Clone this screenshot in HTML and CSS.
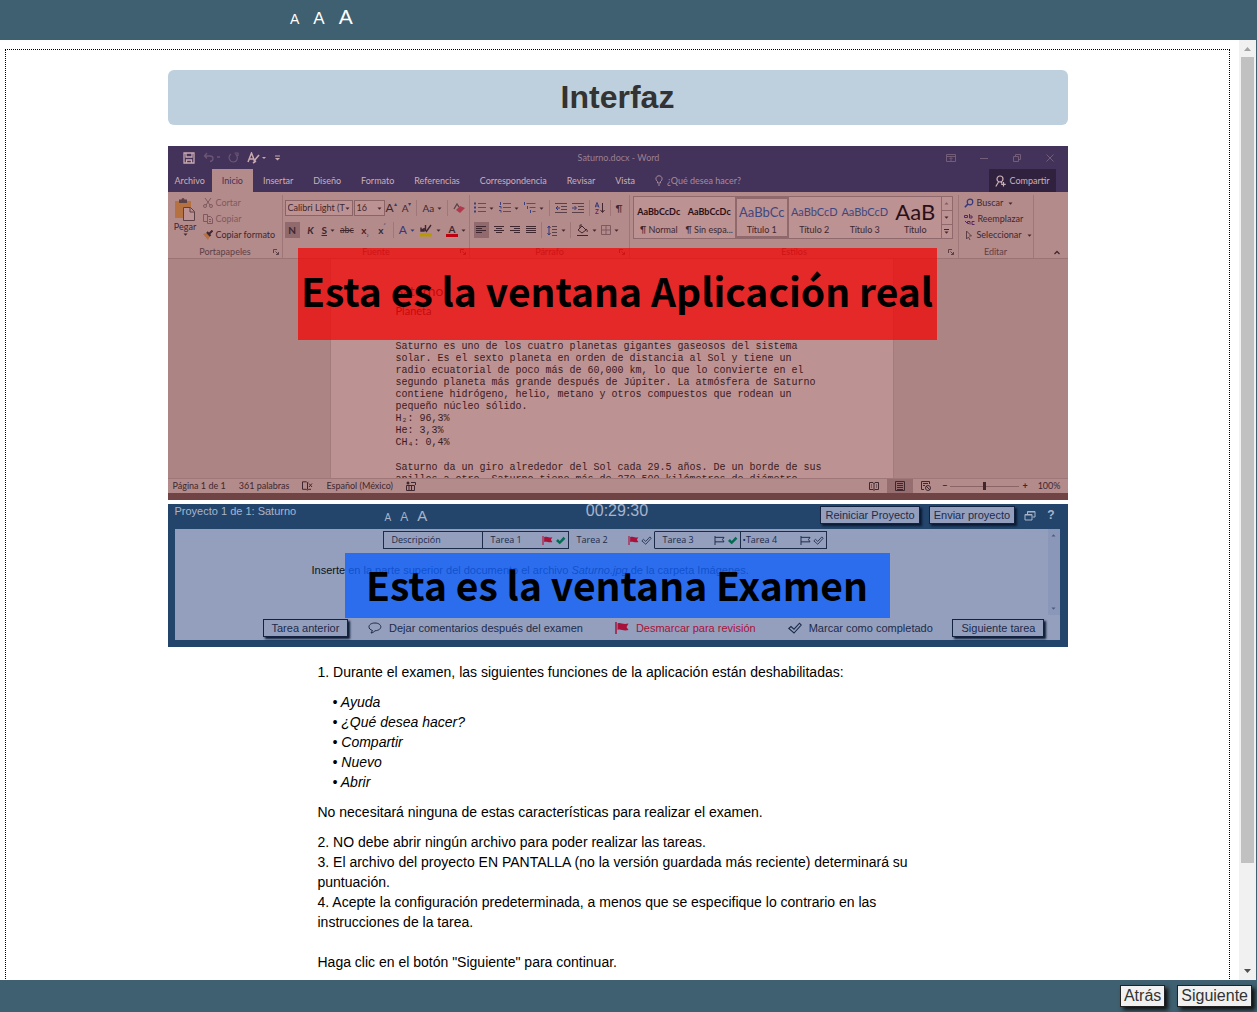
FILE: index.html
```html
<!DOCTYPE html>
<html lang="es">

<head>
  <meta charset="utf-8">
  <meta name="viewport" content="width=device-width, initial-scale=1.0">
  <title>Interfaz</title>
  <link rel="stylesheet" href="styles.css">
</head>

<body>
  <!-- shared icons -->
  <svg class="sprite" aria-hidden="true">
    <symbol id="caret" viewBox="0 0 5 3"><path d="M0.5 0.5h4L2.5 2.8z" fill="currentColor"/></symbol>
    <symbol id="launcher" viewBox="0 0 6 6"><path d="M0.5 4V0.5H4M2.5 2.5l3 3M5.500 3v2.500H3" fill="none" stroke="currentColor"/></symbol>
    <symbol id="flag" viewBox="0 0 14 12"><path d="M1 0v12" stroke="currentColor" stroke-width="1.500"/><path d="M2.500 1.500c3-1.500 5 1.500 11 0l-2 3.500 2 3c-5 1.500-8-1.500-11 0z" fill="currentColor"/></symbol>
    <symbol id="flag-o" viewBox="0 0 14 12"><path d="M1 0v12M1 1.800h12l-2 3 2 3H1" fill="none" stroke="currentColor" stroke-width="1.300"/></symbol>
    <symbol id="check" viewBox="0 0 14 12"><path d="M1 6.500L3.500 4 6 6.500 11 1l2.500 2.500L6 11z" fill="currentColor"/></symbol>
    <symbol id="check-o" viewBox="0 0 14 12"><path d="M.8 6.500L3 4.500 6 7.200 11.500 1.200l1.700 1.800L6 11z" fill="none" stroke="currentColor" stroke-width="1.100"/></symbol>
    <symbol id="lines-left" viewBox="0 0 12 10"><path d="M1 1.500h10M1 3.500h6M1 5.500h10M1 7.500h6" stroke="currentColor"/></symbol>
    <symbol id="lines-center" viewBox="0 0 12 10"><path d="M1 1.500h10M3 3.500h6M1 5.500h10M3 7.500h6" stroke="currentColor"/></symbol>
    <symbol id="lines-right" viewBox="0 0 12 10"><path d="M1 1.500h10M5 3.500h6M1 5.500h10M5 7.500h6" stroke="currentColor"/></symbol>
    <symbol id="lines-full" viewBox="0 0 12 10"><path d="M1 1.500h10M1 3.500h10M1 5.500h10M1 7.500h10" stroke="currentColor"/></symbol>
    <symbol id="bullets" viewBox="0 0 12 12"><path d="M4 1.500h8M4 5.500h8M4 9.500h8" stroke="#6a4a52"/><path d="M0 0.500h2v2H0zM0 4.500h2v2H0zM0 8.500h2v2H0z" fill="#3f3f7c"/></symbol>
    <symbol id="numbers" viewBox="0 0 12 12"><path d="M4 1.500h8M4 5.500h8M4 9.500h8" stroke="#6a4a52"/><path d="M1.500 0v3M0 4.500h2v2M0 8.500h2v2" fill="none" stroke="#3f3f7c"/></symbol>
    <symbol id="multi" viewBox="0 0 12 12"><path d="M2.500 1.500h9M5.500 5.500h6M8.500 9.500h3" stroke="#6a4a52"/><path d="M0.500 0v3M3.500 4v3M6.500 8v3" stroke="#3f3f7c"/></symbol>
    <symbol id="outdent" viewBox="0 0 12 10"><path d="M0 .5h12M6 3.500h6M6 6.500h6M0 9.500h12" stroke="#5c4048"/><path d="M5 5H1M3 3L1 5l2 2" fill="none" stroke="#33397e"/></symbol>
    <symbol id="indent" viewBox="0 0 12 10"><path d="M0 .5h12M6 3.500h6M6 6.500h6M0 9.500h12" stroke="#5c4048"/><path d="M0 5h4M2.500 3l2 2-2 2" fill="none" stroke="#33397e"/></symbol>
  </svg>

  <div id="top_bar">
    <button class="size_s" aria-label="Texto chico">A</button>
    <button class="size_m" aria-label="Texto mediano">A</button>
    <button class="size_l" aria-label="Texto grande">A</button>
  </div>

  <div id="main">
    <div id="scroller">
      <div id="content">
        <h1>Interfaz</h1>

        <div class="demo">
          <!-- application window -->
          <div class="word">
            <div class="word_title">
              <div class="quick">
                <svg width="12" height="12" viewBox="0 0 12 12"><path d="M1 1h10v10H1zM3 1v4h6V1M3.500 11V8h5v3" fill="none" stroke="#c9a9b0" stroke-width="1.300"/></svg>
                <svg class="dim" width="17" height="11" viewBox="0 0 17 11"><path d="M4 1L1.500 4 4 6.500M2 4h5c4 0 4 5 0 5.500M14 5h3" fill="none" stroke="currentColor" stroke-width="1.300"/></svg>
                <svg class="dim" width="11" height="11" viewBox="0 0 11 11"><path d="M3 2C-1 5 2 10 5.500 10S11 5 7.500 2M6.500 1H10v3" fill="none" stroke="currentColor" stroke-width="1.200"/></svg>
                <svg width="20" height="12" viewBox="0 0 20 12"><path d="M1 10L4.500 1 8 10M2 7h5" fill="none" stroke="#c9a9b0" stroke-width="1.500"/><path d="M7 9l5-6M6 11l3-2" stroke="#c9a9b0" stroke-width="1.600"/><path d="M15 5h4l-2 2z" fill="#c9a9b0"/></svg>
                <svg width="5" height="6" viewBox="0 0 5 6"><path d="M0 1h5" stroke="#c9a9b0"/><path d="M0 3h5L2.500 5.500z" fill="#c9a9b0"/></svg>
              </div>
              <span class="doc_name">Saturno.docx - Word</span>
              <div class="win_controls">
                <svg width="10" height="10" viewBox="0 0 10 10"><path d="M.5 1.500h9v7h-9zM.5 3.500h9M5 8V5M3.500 6L5 4.500 6.500 6" fill="none" stroke="currentColor"/></svg>
                <svg width="10" height="10" viewBox="0 0 10 10"><path d="M1 5.500h8" stroke="currentColor"/></svg>
                <svg width="10" height="10" viewBox="0 0 10 10"><path d="M1.500 3.500h5v5h-5zM3.500 3V1.500h5v5H7" fill="none" stroke="currentColor"/></svg>
                <svg width="10" height="10" viewBox="0 0 10 10"><path d="M1.500 1.500l7 7M8.500 1.500l-7 7" stroke="currentColor"/></svg>
              </div>
            </div>

            <div class="word_tabs">
              <button>Archivo</button>
              <button class="active">Inicio</button>
              <button>Insertar</button>
              <button>Diseño</button>
              <button>Formato</button>
              <button>Referencias</button>
              <button>Correspondencia</button>
              <button>Revisar</button>
              <button>Vista</button>
              <button class="tell_me">
                <svg width="8" height="11" viewBox="0 0 8 11"><path d="M2.500 8V6.500C0 5 .5 .8 4 .8S8 5 5.500 6.500V8zM3 10h2" fill="none" stroke="currentColor"/></svg>
                ¿Qué desea hacer?
              </button>
              <button class="share">
                <svg width="11" height="12" viewBox="0 0 11 12"><circle cx="5" cy="4" r="3" fill="none" stroke="currentColor" stroke-width="1.200"/><path d="M.8 11.500L3.500 7M6 6.800l1 1.500M8.500 7v4.500M6.200 9.300h4.500" stroke="currentColor" stroke-width="1.200"/></svg>
                Compartir
              </button>
            </div>

            <div class="ribbon">
              <div class="group g_clip">
                <div class="group_body">
                  <button class="paste">
                    <svg width="20" height="23" viewBox="0 0 20 23"><path d="M0 3h16v17H0z" fill="#b5713f"/><path d="M4 3V1.500h2.500a1.500 1.500 0 0 1 3 0H12V5H4z" fill="#5c4048"/><path d="M8.500 9.500h7l4 4v9h-11z" fill="#bc9292" stroke="#5c4048"/><path d="M15 10v4h4" fill="none" stroke="#5c4048"/></svg>
                    Pegar
                    <svg class="caret"><use href="#caret"/></svg>
                  </button>
                  <div class="stack">
                    <button class="off"><svg width="10" height="10" viewBox="0 0 10 10"><path d="M2 0l5 7M8 0L3 7" stroke="currentColor"/><circle cx="2" cy="8" r="1.500" fill="none" stroke="currentColor"/><circle cx="8" cy="8" r="1.500" fill="none" stroke="currentColor"/></svg>Cortar</button>
                    <button class="off"><svg width="10" height="10" viewBox="0 0 10 10"><path d="M.5 .5h4v7h-4zM4.500 2.500h3l2 2v5h-5zM6 5.500h2M6 7.500h2" fill="none" stroke="currentColor"/></svg>Copiar</button>
                    <button><svg width="10" height="10" viewBox="0 0 10 10"><path d="M0 4l4-1 3 3-2 4z" fill="#b5713f"/><path d="M4 2l3.500 4M6 4l3.500-3.500" stroke="#40272f" stroke-width="2"/></svg>Copiar formato</button>
                  </div>
                </div>
                <div class="group_label">Portapapeles<svg class="launcher"><use href="#launcher"/></svg></div>
              </div>

              <div class="group g_font">
                <div class="rows">
                  <div class="row">
                    <span class="pick"><select class="font_name" aria-label="Fuente"><option>Calibri Light (T</option></select><svg class="caret"><use href="#caret"/></svg></span>
                    <span class="pick"><select class="font_size" aria-label="Tamaño"><option>16</option></select><svg class="caret"><use href="#caret"/></svg></span>
                    <button class="big">A<sup>▴</sup></button>
                    <button>A<sup>▾</sup></button>
                    <button class="sep">Aa<svg class="caret"><use href="#caret"/></svg></button>
                    <button class="sep"><svg width="12" height="11" viewBox="0 0 12 11"><path d="M1 6l3-5 2 3" fill="none" stroke="#5c4048" stroke-width="1.300"/><path d="M3 7l4-4 5 2-5 5z" fill="#b0384c"/></svg></button>
                  </div>
                  <div class="row">
                    <button class="on"><b>N</b></button>
                    <button class="cell"><b><i>K</i></b></button>
                    <button class="cell"><b><u>S</u></b><svg class="caret"><use href="#caret"/></svg></button>
                    <button class="abc"><s>abc</s></button>
                    <button class="cell"><b>x</b><sub>₂</sub></button>
                    <button class="cell"><b>x</b><sup>²</sup></button>
                    <button class="sep outline">A<svg class="caret"><use href="#caret"/></svg></button>
                    <button><svg width="13" height="13" viewBox="0 0 13 13"><path d="M0 9h12v3.500H0z" fill="#b79a00"/><path d="M1 5.500h3M1 3.500v3.500h3V4M6 8l5-7M5.500 1v6" fill="none" stroke="#40272f" stroke-width="1.400"/></svg><svg class="caret"><use href="#caret"/></svg></button>
                    <button><span class="font_color">A</span><svg class="caret"><use href="#caret"/></svg></button>
                  </div>
                </div>
                <div class="group_label">Fuente<svg class="launcher"><use href="#launcher"/></svg></div>
              </div>

              <div class="group g_par">
                <div class="rows par_rows">
                  <div class="row">
                    <button><svg width="12" height="12"><use href="#bullets"/></svg><svg class="caret"><use href="#caret"/></svg></button>
                    <button><svg width="12" height="12"><use href="#numbers"/></svg><svg class="caret"><use href="#caret"/></svg></button>
                    <button><svg width="12" height="12"><use href="#multi"/></svg><svg class="caret"><use href="#caret"/></svg></button>
                    <button class="sep"><svg width="12" height="10"><use href="#outdent"/></svg></button>
                    <button><svg width="12" height="10"><use href="#indent"/></svg></button>
                    <button class="sep"><svg width="10" height="12" viewBox="0 0 10 12"><path d="M0 5.500L2 .5l2 5M.8 4h2.500" fill="none" stroke="#33397e"/><path d="M.5 7.500h3l-3 4h3" fill="none" stroke="#7c2870"/><path d="M7.500 1v9M5.500 8l2 2.500 2-2.500" fill="none" stroke="#40272f"/></svg></button>
                    <button class="sep">¶</button>
                  </div>
                  <div class="row tight">
                    <button class="on"><svg width="12" height="10"><use href="#lines-left"/></svg></button>
                    <button><svg width="12" height="10"><use href="#lines-center"/></svg></button>
                    <button><svg width="12" height="10"><use href="#lines-right"/></svg></button>
                    <button><svg width="12" height="10"><use href="#lines-full"/></svg></button>
                    <button class="sep"><svg width="11" height="11" viewBox="0 0 11 11"><path d="M5 1.500h5M5 4.500h5M5 7.500h5M5 10.500h5" stroke="#5c4048"/><path d="M2 1v9M.5 3L2 1l1.500 2M.5 8L2 10l1.500-2" fill="none" stroke="#33397e"/></svg><svg class="caret"><use href="#caret"/></svg></button>
                    <button class="sep"><svg width="13" height="12" viewBox="0 0 13 12"><path d="M2 6l4-4 4 4-4 3zM4 4V1h2M10 5c2 1 1 3 1 3M1 11.500h11" fill="none" stroke="#40272f"/></svg><svg class="caret"><use href="#caret"/></svg></button>
                    <button><svg width="10" height="10" viewBox="0 0 10 10"><path d="M.5 .5h9v9h-9zM5 .5v9M.5 5h9" fill="none" stroke="#7d5a60"/></svg><svg class="caret"><use href="#caret"/></svg></button>
                  </div>
                </div>
                <div class="group_label">Párrafo<svg class="launcher"><use href="#launcher"/></svg></div>
              </div>

              <div class="group g_styles">
                <div class="gallery">
                  <button><span class="s_norm">AaBbCcDc</span>¶ Normal</button>
                  <button><span class="s_norm">AaBbCcDc</span>¶ Sin espa...</button>
                  <button class="picked"><span class="s_h1">AaBbCc</span>Título 1</button>
                  <button><span class="s_h2">AaBbCcD</span>Título 2</button>
                  <button><span class="s_h3">AaBbCcD</span>Título 3</button>
                  <button><span class="s_title">AaB</span>Título</button>
                  <div class="gallery_nav">
                    <span class="off"><svg class="caret up"><use href="#caret"/></svg></span>
                    <span><svg class="caret"><use href="#caret"/></svg></span>
                    <span class="more"><svg class="caret"><use href="#caret"/></svg></span>
                  </div>
                </div>
                <div class="group_label">Estilos<svg class="launcher"><use href="#launcher"/></svg></div>
              </div>

              <div class="group g_edit">
                <div class="stack">
                  <button><svg width="10" height="10" viewBox="0 0 10 10"><circle cx="6" cy="4" r="2.800" fill="none" stroke="#33397e" stroke-width="1.200"/><path d="M4 6L.8 9.200" stroke="#33397e" stroke-width="1.600"/></svg>Buscar<svg class="caret"><use href="#caret"/></svg></button>
                  <button><svg width="11" height="11" viewBox="0 0 11 11"><path d="M.5 3.500h3v-2h-3v2M5.500 0v4h2.500V2H5.500M1 7l2 2M5 9.500H3.500v-2H6v3M10.500 7.500H8v3h2.500" fill="none" stroke="#5d2462"/></svg>Reemplazar</button>
                  <button><svg width="10" height="11" viewBox="0 0 10 11"><path d="M2.500 1v8l2-2 1.500 3M2.500 1l5 5H5" fill="none" stroke="#5c4048"/></svg>Seleccionar<svg class="caret"><use href="#caret"/></svg></button>
                </div>
                <div class="group_label">Editar</div>
              </div>
              <svg class="collapse" width="6" height="5" viewBox="0 0 6 5"><path d="M.5 4L3 1.500 5.500 4" fill="none" stroke="#40272f" stroke-width="1.300"/></svg>
            </div>

            <div class="doc">
              <div class="page">
                <p class="doc_h1">Saturno</p>
                <p class="doc_h2">Planeta</p>
                <p>Saturno es uno de los cuatro planetas gigantes gaseosos del sistema<br>
                  solar. Es el sexto planeta en orden de distancia al Sol y tiene un<br>
                  radio ecuatorial de poco más de 60,000 km, lo que lo convierte en el<br>
                  segundo planeta más grande después de Júpiter. La atmósfera de Saturno<br>
                  contiene hidrógeno, helio, metano y otros compuestos que rodean un<br>
                  pequeño núcleo sólido.<br>
                  H₂: 96,3%<br>
                  He: 3,3%<br>
                  CH₄: 0,4%</p>
                <p>Saturno da un giro alrededor del Sol cada 29.5 años. De un borde de sus<br>
                  anillos a otro, Saturno tiene más de 270,500 kilómetros de diámetro</p>
              </div>
            </div>

            <div class="status">
              <span>Página 1 de 1</span>
              <span>361 palabras</span>
              <svg width="11" height="10" viewBox="0 0 11 10"><path d="M.5 .8h4l1 1 1-1M5.500 2v6.500M.5 .8v7.500h4l1 1 1-1H9M7 2.500l3 3.500M10 2.500L7 6" fill="none" stroke="currentColor"/></svg>
              <span>Español (México)</span>
              <svg width="10" height="10" viewBox="0 0 10 10"><path d="M.5 4.500h8v5h-8zM3 5v4M5.500 5v4M5 1.500h4.500V4" fill="none" stroke="currentColor"/><circle cx="2" cy="2" r="1.500" fill="currentColor"/></svg>
              <div class="views">
                <button aria-label="Modo de lectura"><svg width="10" height="10" viewBox="0 0 10 10"><path d="M.5 1.500H4l1 1 1-1h3.500v7H6l-1 1-1-1H.5zM5 2v7M2 4h1M2 6h1M7 4h1M7 6h1" fill="none" stroke="currentColor"/></svg></button>
                <button class="on" aria-label="Diseño de impresión"><svg width="10" height="10" viewBox="0 0 10 10"><path d="M.5 .5h9v9h-9zM2 2.500h6M2 4.500h6M2 6.500h6M2 8.500h6" fill="none" stroke="currentColor"/></svg></button>
                <button aria-label="Diseño web"><svg width="10" height="10" viewBox="0 0 10 10"><path d="M3 8.500H.5v-8h8V3M2 2.500h5M2 4.500h2" fill="none" stroke="currentColor"/><circle cx="7" cy="7" r="2.500" fill="none" stroke="currentColor"/><path d="M5 5l4 4" stroke="currentColor"/></svg></button>
              </div>
              <div class="zoom">
                <b>−</b>
                <input type="range" min="0" max="100" value="50" aria-label="Zoom">
                <b>+</b>
                <span>100%</span>
              </div>
            </div>
            <div class="banner banner_app">Esta es la ventana Aplicación real</div>
          </div>

          <!-- exam window -->
          <div class="exam">
            <div class="exam_head">
              <div class="exam_info">
                <span class="project">Proyecto 1 de 1: Saturno</span>
                <div class="sizes"><span>A</span><span class="m">A</span><span class="l">A</span></div>
              </div>
              <span class="timer">00:29:30</span>
              <div class="exam_actions">
                <button class="raised">Reiniciar Proyecto</button>
                <button class="raised">Enviar proyecto</button>
                <svg width="12" height="11" viewBox="0 0 12 11"><path d="M1 4.500h7v5.500H1zM1 5h7M3.500 4V1.500H11V7H8.500M3.500 2H11" fill="none" stroke="#a9b4cb"/></svg>
                <b>?</b>
              </div>
            </div>
            <div class="panel">
              <div class="panel_body">
                <div class="panel_text">
                  <div class="tasks">
                    <button class="first">Descripción</button>
                    <button>Tarea 1<span><svg class="red"><use href="#flag"/></svg><svg class="green"><use href="#check"/></svg></span></button>
                    <button class="current">Tarea 2<span><svg class="red"><use href="#flag"/></svg><svg><use href="#check-o"/></svg></span></button>
                    <button>Tarea 3<span><svg><use href="#flag-o"/></svg><svg class="green"><use href="#check"/></svg></span></button>
                    <button class="dotted">•Tarea 4<span><svg><use href="#flag-o"/></svg><svg><use href="#check-o"/></svg></span></button>
                  </div>
                  <p>Inserte en la parte superior del documento el archivo <i>Saturno.jpg</i> de la carpeta Imágenes.</p>
                </div>
                <div class="mini_scroll"><svg class="up"><use href="#caret"/></svg><svg><use href="#caret"/></svg></div>
              </div>
              <div class="panel_foot">
                <button class="raised flat">Tarea anterior</button>
                <div class="marks">
                  <button class="plain"><svg width="14" height="12" viewBox="0 0 14 12"><path d="M3 11l1.500-2.500C-1 7 0 1 7 1s8.500 7 0 7.800C6 9.800 4.500 11 3 11z" fill="none" stroke="currentColor"/></svg>Dejar comentarios después del examen</button>
                  <button class="plain red"><svg width="14" height="12"><use href="#flag"/></svg>Desmarcar para revisión</button>
                  <button class="plain"><svg width="14" height="12"><use href="#check-o"/></svg>Marcar como completado</button>
                </div>
                <button class="raised flat">Siguiente tarea</button>
              </div>
            </div>
            <div class="banner banner_exam">Esta es la ventana Examen</div>
          </div>
        </div>

        <div class="text">
          <p>1. Durante el examen, las siguientes funciones de la aplicación están deshabilitadas:</p>
          <ul>
            <li>Ayuda</li>
            <li>¿Qué desea hacer?</li>
            <li>Compartir</li>
            <li>Nuevo</li>
            <li>Abrir</li>
          </ul>
          <p>No necesitará ninguna de estas características para realizar el examen.</p>
          <p>2. NO debe abrir ningún archivo para poder realizar las tareas.<br>
            3. El archivo del proyecto EN PANTALLA (no la versión guardada más reciente) determinará su puntuación.<br>
            4. Acepte la configuración predeterminada, a menos que se especifique lo contrario en las instrucciones de la tarea.<br>
            <br>
            Haga clic en el botón "Siguiente" para continuar.</p>
        </div>
      </div>
    </div>
    <div class="scrollbar" aria-hidden="true">
      <svg width="17" height="17" viewBox="0 0 17 17"><path d="M5 11h7L8.500 7z" fill="#a3a3a3"/></svg>
      <div class="track"><div class="thumb"></div></div>
      <svg width="17" height="17" viewBox="0 0 17 17"><path d="M5 6h7l-3.500 4z" fill="#505050"/></svg>
    </div>
  </div>

  <div id="footer">
    <button>Atrás</button>
    <button>Siguiente</button>
  </div>
</body>

</html>
```

FILE: styles.css
```css
* {
  box-sizing: border-box;
}

body {
  display: flex;
  flex-direction: column;
  height: 100vh;
  margin: 0;
  overflow: hidden;
  background-color: #3f6070;
  font-family: "Liberation Sans", Arial, sans-serif;
  font-size: 14px;
  line-height: 20px;
  color: #000;
}

button {
  margin: 0;
  padding: 0;
  border: 0;
  background: none;
  font: inherit;
  color: inherit;
  white-space: nowrap;
  cursor: pointer;
}

svg {
  display: block;
  flex: none;
}

p {
  margin: 0;
}

.sprite {
  position: absolute;
  width: 0;
  height: 0;
}

/* top bar */
#top_bar {
  display: flex;
  flex: none;
  align-items: baseline;
  gap: 14px;
  height: 40px;
  padding: 7px 0 0 290px;
  color: #fff;
}

.size_s {
  font-size: 14px;
}

.size_m {
  font-size: 17px;
}

.size_l {
  font-size: 21px;
}

/* scrolling area */
#main {
  display: flex;
  flex: 1;
  min-height: 0;
  margin-right: 1px;
  background-color: #fff;
}

#scroller {
  flex: 1;
  padding: 9px 9px 9px 5px;
  overflow-y: auto;
  scrollbar-width: none;
}

.scrollbar {
  display: flex;
  flex-direction: column;
  width: 17px;
  background-color: #f1f1f1;
}

.track {
  flex: 1;
  padding: 0 2px;
}

.thumb {
  height: 89%;
  background-color: #c1c1c1;
}

#content {
  padding: 20px 0 100px;
  border: 1px dotted #000;
}

h1 {
  max-width: 900px;
  margin: 0 auto 21px;
  border-radius: 6px;
  background-color: #bed0de;
  font-size: 32px;
  line-height: 55px;
  text-align: center;
  color: #333;
}

.text {
  max-width: 600px;
  margin: 15px auto 0;
}

.text p,
.text ul {
  margin: 0 0 10px;
}

.text ul {
  padding-left: 15px;
  list-style: none;
  font-style: italic;
}

.text li::before {
  content: "• ";
}

/* illustration */
.demo {
  display: flex;
  flex-direction: column;
  gap: 4px;
  max-width: 900px;
  margin: 0 auto;
}

.demo button {
  cursor: default;
}

.banner {
  position: absolute;
  font-family: "Noto Sans CJK SC", "Open Sans", sans-serif;
  font-size: 39px;
  font-weight: bold;
  text-align: center;
  white-space: nowrap;
  color: #000;
}

.banner_app {
  top: 102px;
  left: 130px;
  right: 131px;
  height: 92px;
  line-height: 84px;
  background-color: rgba(243, 5, 6, 0.75);
}

.banner_exam {
  top: 49px;
  left: 177px;
  right: 178px;
  height: 65px;
  line-height: 63px;
  background-color: rgba(18, 96, 249, 0.8);
}

/* word window */
.word {
  position: relative;
  border-bottom: 7px solid #704444;
  background-color: #433259;
  font-family: Lato, "Open Sans", sans-serif;
  font-size: 9px;
  line-height: 12px;
  color: #40272f;
}

.word_title {
  display: grid;
  grid-template-columns: 1fr auto 1fr;
  align-items: center;
  height: 23px;
  padding: 0 13px 0 15px;
  color: #9b8092;
}

.quick {
  display: flex;
  align-items: center;
  gap: 8px;
}

.dim {
  color: #6b5675;
}

.win_controls {
  display: flex;
  justify-content: flex-end;
  gap: 23px;
  color: #745d78;
}

.word_tabs {
  display: flex;
  height: 23px;
  padding-right: 12px;
  color: #cdb0b6;
}

.word_tabs button {
  padding: 0 10px;
}

.word_tabs button:first-child {
  padding: 0 7px;
}

.word_tabs .active {
  background-color: #b48b8b;
  color: #433259;
}

.word_tabs .tell_me {
  display: flex;
  align-items: center;
  gap: 4px;
  color: #a88b9b;
}

.word_tabs .share {
  display: flex;
  align-items: center;
  gap: 3px;
  margin-left: auto;
  padding: 0 6px;
  background-color: #30223f;
}

.ribbon {
  display: flex;
  height: 67px;
  padding-top: 3px;
  border-bottom: 1px solid #9c7475;
  background-color: #b48b8b;
}

.group {
  display: flex;
  flex-direction: column;
  justify-content: space-between;
  border-right: 1px solid #9f7778;
}

.g_clip {
  width: 115px;
}

.g_font {
  width: 187px;
}

.g_par {
  width: 160px;
}

.g_styles {
  width: 329px;
}

.g_edit {
  width: 75px;
}

.group_body {
  display: flex;
}

.group_label {
  display: flex;
  justify-content: center;
  padding-left: 10px;
  color: #5c4048;
}

.launcher {
  width: 6px;
  height: 6px;
  margin: 3px 3px 0 auto;
  color: #5c4048;
}

.group_label::before {
  content: "";
  margin-left: auto;
}

.g_edit .group_label {
  padding: 0;
}

.g_edit .group_label::before {
  display: none;
}

.paste {
  display: flex;
  flex-direction: column;
  align-items: center;
  width: 35px;
  padding-top: 3px;
}

.caret {
  width: 5px;
  height: 3px;
}

.stack {
  display: flex;
  flex-direction: column;
}

.g_edit .stack {
  padding-left: 5px;
}

.stack button {
  display: flex;
  align-items: center;
  gap: 3px;
  height: 16px;
}

.stack .caret {
  margin-left: 2px;
}

.off {
  color: #7d5a60;
}

.rows {
  display: flex;
  flex-direction: column;
  gap: 4px;
  padding: 4px 0 0 2px;
}

.par_rows {
  padding-left: 4px;
}

.row {
  display: flex;
  align-items: center;
  gap: 5px;
  height: 18px;
}

.row button {
  display: flex;
  align-items: center;
  justify-content: center;
  gap: 3px;
  height: 16px;
  font-size: 10px;
}

.tight {
  gap: 4px;
}

.row .sep {
  padding-left: 5px;
  border-left: 1px solid #9f7778;
}

.row .on {
  width: 15px;
  background-color: #906a6c;
}

.row .cell {
  min-width: 12px;
}

.row .abc {
  font-size: 9px;
}

.row .outline {
  font-size: 12px;
  color: #33397e;
}

.row .big {
  font-size: 12px;
}

.row sup,
.row sub {
  align-self: flex-start;
  margin-left: -3px;
  font-size: 6px;
  line-height: 8px;
  color: #33397e;
}

.row sub {
  align-self: flex-end;
}

.font_color {
  width: 12px;
  border-bottom: 3px solid #c00010;
  line-height: 10px;
  font-weight: bold;
}

.pick {
  position: relative;
  margin-right: -4px;
}

.pick .caret {
  position: absolute;
  top: 7px;
  right: 3px;
}

.pick select {
  display: block;
  height: 16px;
  margin: 0;
  padding: 0 0 0 2px;
  border: 1px solid #8a6466;
  border-radius: 0;
  background-color: #bc9292;
  font: inherit;
  color: inherit;
  appearance: none;
}

.font_name {
  width: 68px;
}

.font_size {
  width: 31px;
}

.gallery {
  display: flex;
  height: 43px;
  margin: 1px 5px 0 3px;
  border: 1px solid #8f696b;
  background-color: #bc9292;
}

.gallery button {
  display: flex;
  flex: 1;
  flex-direction: column;
  align-items: center;
  justify-content: flex-end;
  min-width: 0;
  padding-bottom: 2px;
}

.gallery .picked {
  border: 2px solid #8f696b;
  padding-bottom: 0;
}

.gallery button span {
  height: 24px;
  line-height: 24px;
}

.s_norm {
  font-size: 9px;
  font-weight: bold;
  color: #2b0f18;
}

.s_h1 {
  font-size: 13px;
  color: #3d4781;
}

.s_h2,
.s_h3 {
  font-size: 11px;
  color: #3d4781;
}

.s_title {
  font-size: 22px;
  color: #2b0f18;
}

.gallery_nav {
  display: flex;
  flex-direction: column;
  width: 11px;
  border-left: 1px solid #8f696b;
}

.gallery_nav span {
  display: flex;
  flex: 1;
  align-items: center;
  justify-content: center;
  border-bottom: 1px solid #8f696b;
}

.gallery_nav .more {
  border-bottom: 0;
}

.gallery_nav .more .caret {
  height: 5px;
  padding-top: 1px;
  border-top: 1px solid #40272f;
}

.up {
  transform: rotate(180deg);
}

.collapse {
  align-self: flex-end;
  margin: 0 8px 3px auto;
}

.doc {
  height: 219px;
  overflow: hidden;
  background-color: #ac8483;
}

.page {
  height: 219px;
  margin: 0 174px 0 162px;
  padding: 22px 0 0 65px;
  border: 1px solid #a57c7c;
  border-width: 0 1px;
  overflow: hidden;
  background-color: #bc9292;
  font-family: "Liberation Mono", "Courier New", monospace;
  font-size: 10px;
  color: #3a1b20;
  white-space: nowrap;
}

.page p {
  margin-bottom: 13px;
}

.page .doc_h1,
.page .doc_h2 {
  margin: 0;
  font-family: Lato, "Open Sans", sans-serif;
  font-size: 14px;
  line-height: 20px;
}

.page .doc_h2 {
  margin-bottom: 20px;
  font-size: 11px;
}

.status {
  display: flex;
  align-items: center;
  gap: 13px;
  height: 15px;
  padding: 0 7px 0 5px;
  border-top: 1px solid #9f7778;
  background-color: #b48b8b;
}

.views {
  display: flex;
  margin-left: auto;
}

.views button {
  padding: 2px 8px;
}

.views .on {
  background-color: #966e70;
}

.zoom {
  display: flex;
  align-items: center;
  gap: 3px;
  margin-left: -10px;
}

.zoom span {
  margin-left: 7px;
}

.zoom input {
  width: 69px;
  height: 9px;
  margin: 0;
  background: linear-gradient(#8a6466, #8a6466) no-repeat center / 100% 1px;
  appearance: none;
}

.zoom input::-webkit-slider-thumb {
  width: 3px;
  height: 8px;
  background: #40272f;
  appearance: none;
}

/* exam window */
.exam {
  position: relative;
  padding: 0 8px 7px 7px;
  background-color: #23456b;
  font-size: 11px;
  line-height: 14px;
  color: #1c2b4a;
}

.exam_head {
  display: grid;
  grid-template-columns: 1fr auto 1fr;
  height: 25px;
  color: #a9b4cb;
}

.exam_info {
  display: flex;
}

.project {
  flex: none;
  width: 210px;
}

.sizes {
  display: flex;
  align-items: baseline;
  gap: 9px;
  padding-top: 5px;
  font-size: 10px;
}

.sizes .m {
  font-size: 12px;
}

.sizes .l {
  font-size: 15px;
}

.timer {
  font-size: 16px;
}

.exam_actions {
  display: flex;
  align-items: flex-start;
  justify-content: flex-end;
  gap: 9px;
  padding: 2px 3px 0 0;
}

.exam_actions svg {
  margin-top: 4px;
}

.exam_actions b {
  padding: 2px;
  font-size: 12px;
}

.raised {
  height: 18px;
  padding: 0 4px;
  border: 1px solid #13233f;
  box-shadow: 2px 2px 2px #0b1a33;
  background-color: #949fbe;
  color: #1c2b4a;
}

.panel {
  background-color: #949fbe;
}

.panel_body {
  display: flex;
  height: 86px;
}

.panel_text {
  flex: 1;
  padding: 2px 0 0 137px;
}

.panel_text p {
  margin-top: 14px;
  color: #0b1220;
}

.tasks {
  display: flex;
  margin-left: 71px;
  font-family: "Open Sans", "Noto Sans", sans-serif;
  font-size: 9px;
}

.tasks button {
  display: flex;
  align-items: center;
  justify-content: space-between;
  width: 86px;
  height: 18px;
  padding: 0 2px 0 8px;
  border: 1px solid #1c2b4a;
  border-left: 0;
}

.tasks .first {
  width: 100px;
  border-left: 1px solid #1c2b4a;
}

.tasks .current {
  border-top-color: transparent;
  border-bottom-color: transparent;
}

.tasks .dotted {
  padding-left: 2px;
}

.tasks span {
  display: flex;
  gap: 2px;
}

.tasks svg {
  width: 11px;
  height: 9px;
}

.red {
  color: #a8123a;
}

.green {
  color: #046a52;
}

.mini_scroll {
  display: flex;
  flex-direction: column;
  align-items: center;
  justify-content: space-between;
  width: 12px;
  padding: 5px 0;
  background-color: #8b97b8;
  color: #4b5a7f;
}

.mini_scroll svg {
  width: 5px;
  height: 3px;
}

.panel_foot {
  display: flex;
  align-items: center;
  justify-content: space-between;
  height: 25px;
  padding: 0 15px 0 88px;
}

.marks {
  display: flex;
  gap: 32px;
}

.flat {
  padding: 0 8px;
}

.plain {
  display: flex;
  align-items: center;
  gap: 7px;
}

/* bottom bar */
#footer {
  display: flex;
  flex: none;
  align-items: flex-start;
  justify-content: flex-end;
  gap: 12px;
  height: 32px;
  padding: 5px 5px 0 0;
}

#footer button {
  height: 22px;
  padding: 0 3px;
  border: 1px solid #222;
  box-shadow: 3px 3px 4px #111;
  background-color: #f1f1f1;
  font-size: 16px;
  line-height: 18px;
  color: #333;
}
```
